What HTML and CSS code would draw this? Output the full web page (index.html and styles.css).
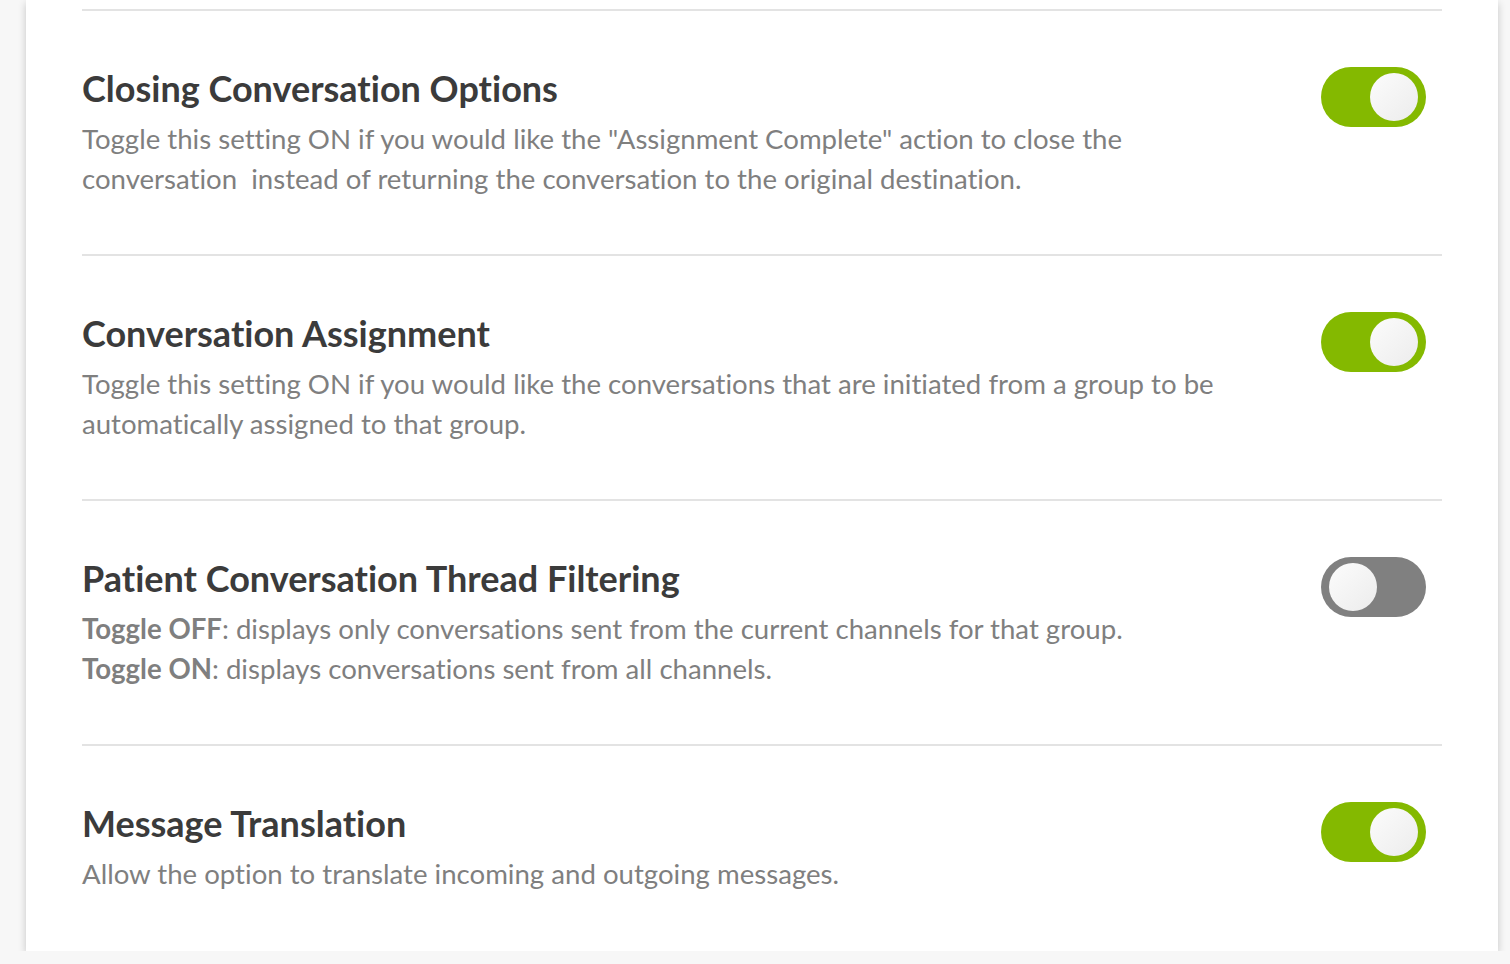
FILE: index.html
```html
<!DOCTYPE html>
<html lang="en">
<head>
<meta charset="utf-8">
<title>Settings</title>
<link rel="stylesheet" href="styles.css">
</head>
<body>
<div class="card">
  <section class="setting">
    <div class="setting-text">
      <h2 class="setting-title">Closing Conversation Options</h2>
      <p class="setting-desc">Toggle this setting ON if you would like the "Assignment Complete" action to close the conversation&nbsp; instead of returning the conversation to the original destination.</p>
    </div>
    <div class="toggle toggle-on"><span class="knob"></span></div>
  </section>
  <section class="setting">
    <div class="setting-text">
      <h2 class="setting-title">Conversation Assignment</h2>
      <p class="setting-desc">Toggle this setting ON if you would like the conversations that are initiated from a group to be automatically assigned to that group.</p>
    </div>
    <div class="toggle toggle-on"><span class="knob"></span></div>
  </section>
  <section class="setting">
    <div class="setting-text">
      <h2 class="setting-title">Patient Conversation Thread Filtering</h2>
      <p class="setting-desc"><strong>Toggle OFF</strong>: displays only conversations sent from the current channels for that group.<br><strong>Toggle ON</strong>: displays conversations sent from all channels.</p>
    </div>
    <div class="toggle toggle-off"><span class="knob"></span></div>
  </section>
  <section class="setting setting-last">
    <div class="setting-text">
      <h2 class="setting-title">Message Translation</h2>
      <p class="setting-desc">Allow the option to translate incoming and outgoing messages.</p>
    </div>
    <div class="toggle toggle-on"><span class="knob"></span></div>
  </section>
</div>
</body>
</html>
```
FILE: styles.css
```css
html, body {
  margin: 0;
  padding: 0;
}
body {
  background: #f7f7f7;
  font-family: Lato, "Open Sans", sans-serif;
  font-variant-ligatures: none;
  font-feature-settings: "liga" 0;
  overflow: hidden;
}
.card {
  margin-left: 26px;
  width: 1472px;
  background: #ffffff;
  box-sizing: border-box;
  padding: 9px 56px 0 56px;
  box-shadow: 0 3px 8px rgba(0, 0, 0, 0.2);
}
.setting {
  display: flex;
  align-items: flex-start;
  justify-content: space-between;
  border-top: 2px solid #e3e3e3;
  padding: 56px 16px 55px 0;
}
.setting-last {
  padding-bottom: 57px;
}
.setting-text {
  width: 1160px;
}
.setting-title {
  margin: 0;
  font-size: 36px;
  line-height: 42px;
  font-weight: 700;
  color: #3b3b3b;
}
.setting-desc {
  margin: 10px 0 0 0;
  font-size: 27.6px;
  line-height: 40px;
  color: #7f7f7f;
}
.setting-desc strong {
  font-weight: 700;
}
.toggle {
  flex: none;
  width: 105px;
  height: 60px;
  border-radius: 30px;
  box-sizing: border-box;
  padding: 6px 8px;
  display: flex;
}
.toggle-on {
  background: #84b900;
  justify-content: flex-end;
}
.toggle-off {
  background: #808080;
  justify-content: flex-start;
}
.knob {
  width: 48px;
  height: 48px;
  border-radius: 50%;
  background: linear-gradient(135deg, #fcfcfc 0%, #ececec 100%);
}
```
